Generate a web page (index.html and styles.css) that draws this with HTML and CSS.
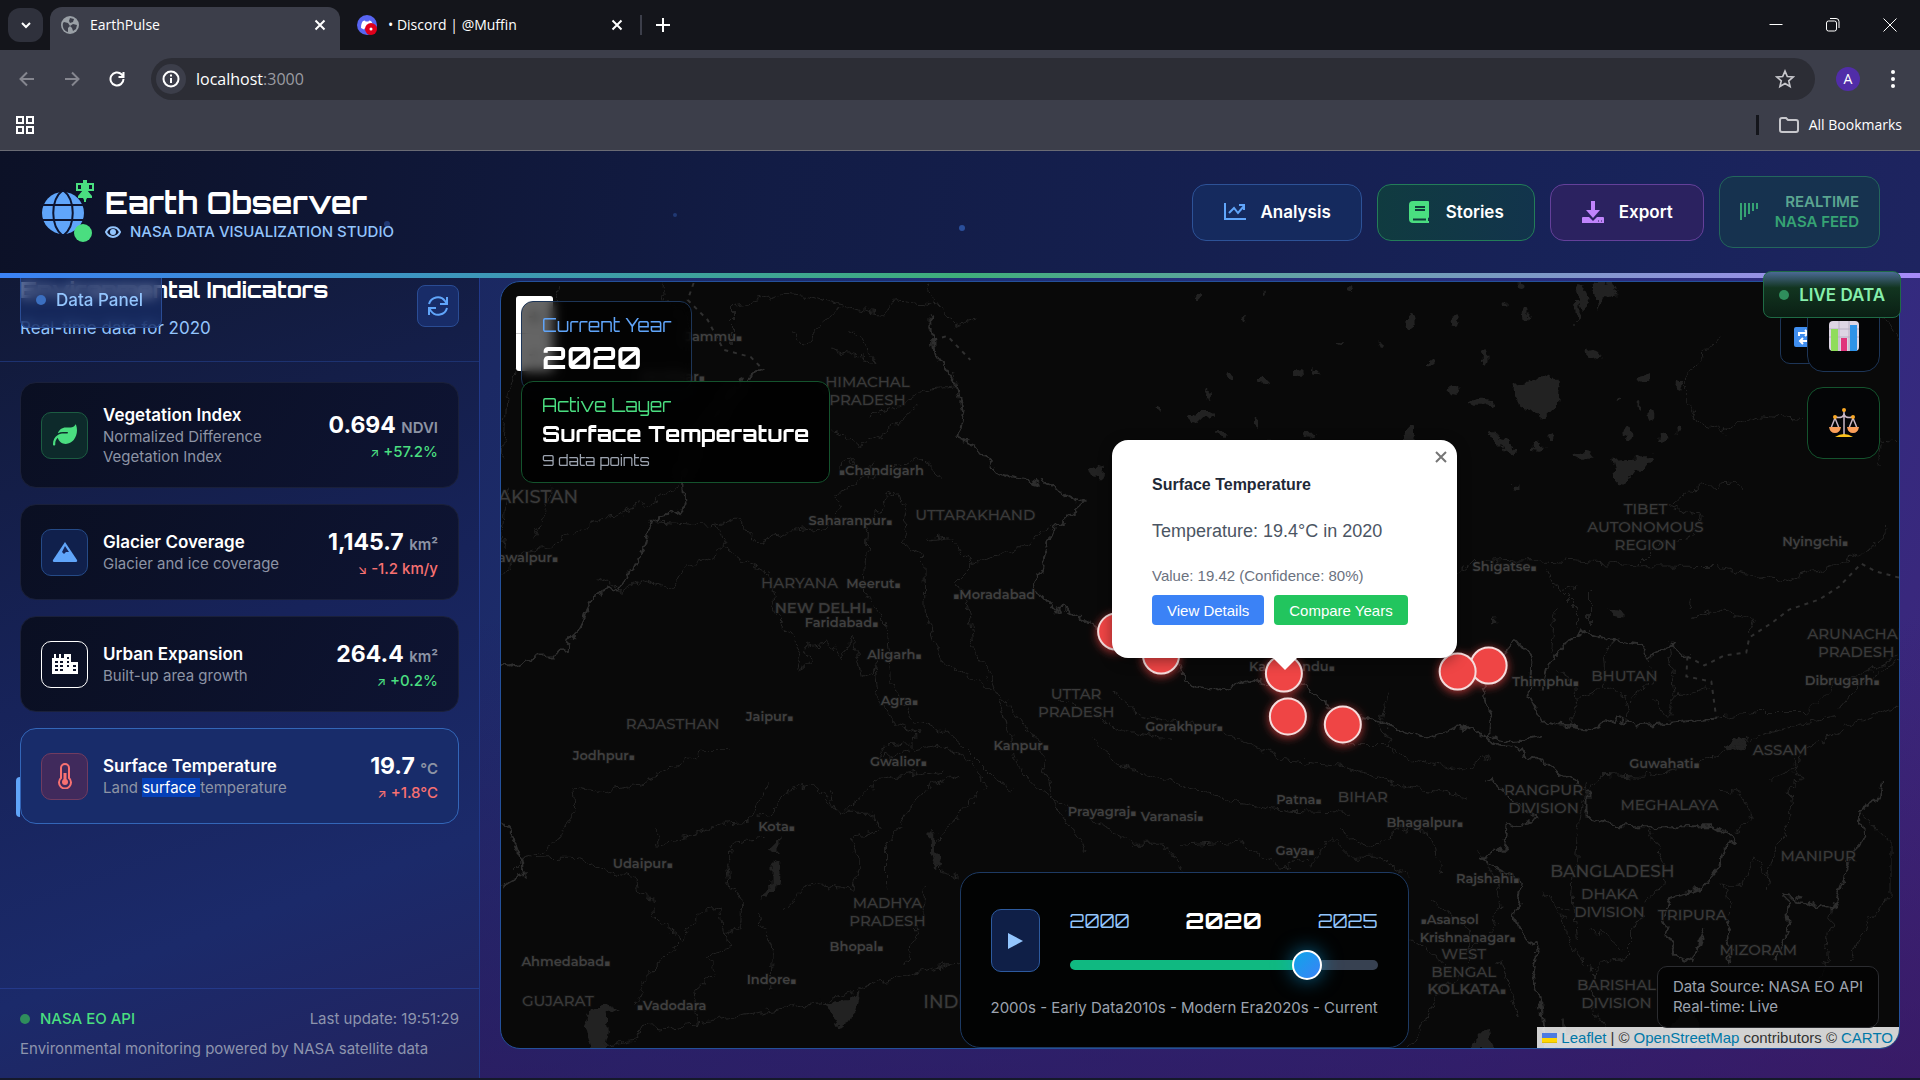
FILE: index.html
```html
<!DOCTYPE html>
<html lang="en">
<head>
<meta charset="utf-8">
<meta name="viewport" content="width=device-width, initial-scale=1">
<title>EarthPulse</title>
<link rel="stylesheet" href="styles.css">
</head>
<body>
<div class="browser">
  <div class="tabstrip">
    <button class="tab-search" aria-label="Search tabs"><svg width="12" height="12" viewBox="0 0 12 12"><path d="M2 4l4 4 4-4" class="line w2"/></svg></button>
    <div class="tab active">
      <svg width="18" height="18" viewBox="0 0 18 18"><circle cx="9" cy="9" r="9" fill="#9aa0a6"/><path d="M3 6l4 1 2 3-2 2v4C3 15 1 11 2 7zM9 2l4 1-1 3-3 1-1-2zM12 8l4 1-1 4-3 2-1-3-2-2z" fill="#3c3e4a"/></svg>
      <span class="tab-title">EarthPulse</span>
      <button class="close" aria-label="Close tab"><svg width="12" height="12" viewBox="0 0 12 12"><path d="M1.500 1.500l9 9m0-9l-9 9" class="line w2"/></svg></button>
    </div>
    <div class="tab">
      <svg width="20" height="20" viewBox="0 0 20 20"><circle cx="10" cy="10" r="10" fill="#5865f2"/><path d="M4 13c0-4 1-6 2-7l2-.5.5 1h3l.5-1 2 .5c1 1 2 3 2 7l-3 1.500-1-1.500H8l-1 1.500z" fill="#fff"/><circle cx="14" cy="14" r="6" fill="#e0001b"/><circle cx="14" cy="14" r="1.500" fill="#fff"/></svg>
      <span class="tab-title">• Discord | @Muffin</span>
      <button class="close" aria-label="Close tab"><svg width="12" height="12" viewBox="0 0 12 12"><path d="M1.500 1.500l9 9m0-9l-9 9" class="line w2"/></svg></button>
    </div>
    <span class="tab-divider"></span>
    <button class="new-tab" aria-label="New tab"><svg width="14" height="14" viewBox="0 0 14 14"><path d="M7 0v14M0 7h14" class="line w2"/></svg></button>
    <div class="window-controls">
      <button aria-label="Minimize"><svg width="14" height="14" viewBox="0 0 14 14"><path d="M.5 6.500h13" class="line"/></svg></button>
      <button aria-label="Restore"><svg width="14" height="14" viewBox="0 0 14 14"><path d="M.5 5a2 2 0 0 1 2-2h6a2 2 0 0 1 2 2v6a2 2 0 0 1-2 2h-6a2 2 0 0 1-2-2zM4 .5h6a3 3 0 0 1 3 3V10" class="line"/></svg></button>
      <button aria-label="Close"><svg width="14" height="14" viewBox="0 0 14 14"><path d="M.5.5l13 13m0-13l-13 13" class="line"/></svg></button>
    </div>
  </div>
  <div class="toolbar">
    <button class="dim" aria-label="Back"><svg width="16" height="16" viewBox="0 0 16 16"><path d="M15 8H2M8 1.500L1.500 8 8 14.500" class="line w2"/></svg></button>
    <button class="dim" aria-label="Forward"><svg width="16" height="16" viewBox="0 0 16 16"><path d="M1 8h13M8 1.500L14.500 8 8 14.500" class="line w2"/></svg></button>
    <button aria-label="Reload"><svg width="16" height="16" viewBox="0 0 16 16"><path d="M14.500 8A6.500 6.500 0 1 1 12.500 3.300L14 5M14.500 1v5h-5" class="line w2"/></svg></button>
    <div class="omnibox">
      <span class="site-info"><svg width="18" height="18" viewBox="0 0 18 18"><circle cx="9" cy="9" r="7.500" class="line w2"/><path d="M9 8v5M9 4.500v2" class="line w2"/></svg></span>
      <span class="url">localhost<i>:3000</i></span>
      <svg width="20" height="20" viewBox="0 0 24 24" class="star"><path d="M12 2.500l2.800 6.500 7 .6-5.300 4.600 1.600 6.900L12 17.500l-6.100 3.600 1.600-6.900L2.200 9.600l7-.6z" class="line w2"/></svg>
    </div>
    <span class="avatar">A</span>
    <button class="kebab" aria-label="Menu"><svg width="4" height="18" viewBox="0 0 4 18"><g fill="#fff"><circle cx="2" cy="2" r="2"/><circle cx="2" cy="9" r="2"/><circle cx="2" cy="16" r="2"/></g></svg></button>
  </div>
  <div class="bookmarks">
    <svg width="18" height="18" viewBox="0 0 18 18"><path d="M1 1h6v6H1zM11 1h6v6h-6zM1 11h6v6H1zM11 11h6v6h-6z" class="line w2"/></svg>
    <a href="#" class="all-bookmarks"><svg width="20" height="16" viewBox="0 0 20 16"><path d="M1 13V3a2 2 0 0 1 2-2h4l2 2h8a2 2 0 0 1 2 2v8a2 2 0 0 1-2 2H3a2 2 0 0 1-2-2z" fill="none" stroke="#c7c7cc" stroke-width="2"/></svg>All Bookmarks</a>
  </div>
</div>

<div class="app">
  <header class="app-header">
    <svg class="particles" viewBox="0 0 1920 122" preserveAspectRatio="xMidYMid slice"><g fill="#3b6fd0"><circle cx="675" cy="64" r="2" opacity=".35"/><circle cx="962" cy="77" r="3" opacity=".6"/><circle cx="387" cy="73" r="3" opacity=".4"/><circle cx="1250" cy="71" r="2" opacity=".6"/><circle cx="1827" cy="75" r="3" opacity=".4"/></g></svg>
    <div class="brand">
      <svg width="56" height="64" viewBox="0 0 56 64">
        <circle cx="23" cy="33" r="21" fill="#60a5fa"/>
        <path d="M0 25h46M0 40h46M23 10c-13 10-13 36 0 46M23 10c13 10 13 36 0 46" fill="none" stroke="#0d1430" stroke-width="2"/>
        <path d="M37 4h5v6h-5zM48 4h5v6h-5z" fill="none" stroke="#4ade80" stroke-width="2"/><path d="M43 0h4v10l5 6v2h-5l-1 2v2h-2v-2l-1-2h-5v-2l5-6z" fill="#4ade80"/><circle cx="43" cy="53" r="9" fill="#4ade80"/>
      </svg>
      <div class="brand-text">
        <h1>Earth Observer</h1>
        <p><svg width="16" height="12" viewBox="0 0 16 12"><path d="M1 6c3-6.500 11-6.500 14 0-3 6.500-11 6.500-14 0z" fill="none" stroke="#93c5fd" stroke-width="2"/><circle cx="8" cy="6" r="3" fill="#93c5fd"/></svg>NASA DATA VISUALIZATION STUDIO</p>
      </div>
    </div>
    <nav>
      <button class="nav-btn blue"><svg width="24" height="24" viewBox="0 0 24 24"><path d="M2 3v16h21M6 13l5-5 4 5 6-7M16 5h5v5" fill="none" stroke="#60a5fa" stroke-width="2"/></svg>Analysis</button>
      <button class="nav-btn green"><svg width="24" height="24" viewBox="0 0 24 24"><path d="M5 1h15a1 1 0 0 1 1 1v15a1 1 0 0 1-1 1v3h1v2H5a4 4 0 0 1-4-4V5a4 4 0 0 1 4-4z" fill="#4ade80"/><path d="M7 7h10M7 10h10M5 19.500h13" stroke="#103b3b" stroke-width="2"/></svg>Stories</button>
      <button class="nav-btn purple"><svg width="24" height="24" viewBox="0 0 24 24"><path d="M10 1h4v9h5l-7 8-7-8h5zM2 17h6l4 4 4-4h6a1 1 0 0 1 1 1v5H1v-5a1 1 0 0 1 1-1z" fill="#c084fc"/><path d="M17 21h1M20 21h1" stroke="#2b1d5c" stroke-width="1"/></svg>Export</button>
      <div class="feed"><svg width="20" height="18" viewBox="0 0 20 18"><path d="M1 0v17M5 0v14M9 0v11M13 0v8M17 0v6" stroke="#36a374" stroke-width="2"/></svg><span><b>REALTIME</b><br>NASA FEED</span></div>
    </nav>
  </header>

  <main>
    <aside class="sidebar">
      <span class="panel-tag"><i class="dot"></i>Data Panel</span>
      <div class="side-head">
        <div><h2>Environmental Indicators</h2><p>Real-time data for 2020</p></div>
        <button aria-label="Refresh"><svg width="20" height="20" viewBox="0 0 20 20"><path d="M1 8a9 9 0 0 1 16-3l2 3M19 1v7h-7M19 12a9 9 0 0 1-16 3l-2-3M1 19v-7h7" fill="none" stroke="#60a5fa" stroke-width="2"/></svg></button>
      </div>
      <div class="cards">
        <article class="card">
          <span class="icon green"><svg width="26" height="24" viewBox="0 0 512 512"><path fill="#4ade80" d="M272 96c-78.600 0-145.100 51.500-167.700 122.500c33.600-17 71.500-26.500 111.700-26.500h88c8.800 0 16 7.200 16 16s-7.200 16-16 16H216c-16.600 0-32.700 1.900-48.300 5.400c-25.900 5.900-49.900 16.400-71.400 30.700C38.300 298.800 0 364.900 0 440v16c0 13.300 10.700 24 24 24s24-10.700 24-24V440c0-48.700 20.700-92.500 53.800-123.200C121.600 392.300 190.300 448 272 448l1 0c132.100-.7 239-130.900 239-291.400c0-42.600-7.500-83.100-21.100-119.600c-2.600-6.900-12.700-6.600-16.200-.1C455.900 72.100 418.700 96 376 96L272 96z"/></svg></span>
          <div class="name"><h3>Vegetation Index</h3><p>Normalized Difference Vegetation Index</p></div>
          <div class="value"><strong>0.694 <small>NDVI</small></strong><span class="up"><em>↗</em> +57.2%</span></div>
        </article>
        <article class="card">
          <span class="icon blue"><svg width="26" height="22" viewBox="0 0 26 22"><path d="M13 1l12 18c.5 1 0 2-1 2H2c-1 0-1.500-1-1-2z" fill="#60a5fa"/><path d="M13 5l4 6h-3l-2 2-2-2z" fill="#15265c"/></svg></span>
          <div class="name"><h3>Glacier Coverage</h3><p>Glacier and ice coverage</p></div>
          <div class="value"><strong>1,145.7 <small>km²</small></strong><span class="down"><em>↘</em> -1.2 km/y</span></div>
        </article>
        <article class="card">
          <span class="icon plain"><svg width="26" height="22" viewBox="0 0 26 22"><path d="M0 5h2V1h2v4h3V1h2v4h3V1h7v8h7v12H0z" fill="#fff"/><path d="M3 9h3M8 9h3M15 5h2M15 9h2M3 13h3M8 13h3M15 13h2M21 13h3M3 17h3M8 17h3M21 17h3" stroke="#0c1229" stroke-width="2"/></svg></span>
          <div class="name"><h3>Urban Expansion</h3><p>Built-up area growth</p></div>
          <div class="value"><strong>264.4 <small>km²</small></strong><span class="up"><em>↗</em> +0.2%</span></div>
        </article>
        <article class="card selected">
          <span class="icon red"><svg width="14" height="26" viewBox="0 0 14 26"><path d="M3 15V5a4 4 0 0 1 8 0v10a6 6 0 1 1-8 0z" fill="none" stroke="#f87171" stroke-width="2"/><circle cx="7" cy="19" r="3" fill="#f87171"/><path d="M7 10v9" stroke="#f87171" stroke-width="3"/></svg></span>
          <div class="name"><h3>Surface Temperature</h3><p>Land <mark>surface </mark>temperature</p></div>
          <div class="value"><strong>19.7 <small>°C</small></strong><span class="down"><em>↗</em> +1.8°C</span></div>
        </article>
      </div>
      <footer>
        <div><span class="api"><i class="dot"></i>NASA EO API</span><span>Last update: 19:51:29</span></div>
        <p>Environmental monitoring powered by NASA satellite data</p>
      </footer>
    </aside>

    <section class="map" aria-label="Map">
      <svg class="tiles" viewBox="500 282 1400 767" preserveAspectRatio="xMidYMid slice">
        <defs><filter id="rough" x="-5%" y="-5%" width="110%" height="110%"><feTurbulence type="fractalNoise" baseFrequency=".09" numOctaves="3" seed="4"/><feDisplacementMap in="SourceGraphic" scale="13" xChannelSelector="R" yChannelSelector="G"/></filter>
        <filter id="glow" x="-50%" y="-50%" width="200%" height="200%"><feDropShadow dx="0" dy="2" stdDeviation="5" flood-color="#ef4444" flood-opacity=".75"/></filter></defs>
        <g class="water" filter="url(#rough)">
          <path d="M590 1010l13-7 15 10-11 1 1 20-4 16h-14l-6-22zM1514 385l22-4 12-8 12 14-3 18-14 14-12-9-16-5zM1612 459l43-2-9 11-14 9-15 7zM1488 431l16 7 13 12-5 4-12-8zM1575 285l10 3 5 15-6 6zM1595 285l18-3 4 12-12 3-6 12zM1575 300l6 1v18l-4 4zM1750 745l-22 8-2-7 14-7zM1608 609l18 3v7l-12-2zM820 1005l28-3 10-9-4 24-16 12-4-12zM772 860l8 4-2 22-16 15 2-8 8-8zM766 850l12-12v16zM930 833h5v20l8 12-8 6-4-16zM1675 1025l12-24 12 22v26h-30zM1470 1049l20-23 4 23zM1545 1049l18-28 6 20 10-12 8 20z"/>
          <g><ellipse cx="1196" cy="297" rx="3" ry="2"/><ellipse cx="1265" cy="293" rx="2" ry="3"/><ellipse cx="1243" cy="320" rx="3" ry="2"/><ellipse cx="1410" cy="323" rx="5" ry="7"/><ellipse cx="1455" cy="320" rx="3" ry="3"/><ellipse cx="1505" cy="305" rx="2" ry="4"/><ellipse cx="1526" cy="312" rx="3" ry="8"/><ellipse cx="1522" cy="286" rx="4" ry="3"/><ellipse cx="1382" cy="345" rx="3" ry="3"/><ellipse cx="1340" cy="341" rx="3" ry="2"/><ellipse cx="1485" cy="358" rx="3" ry="7"/><ellipse cx="1430" cy="362" rx="4" ry="2"/><ellipse cx="1593" cy="354" rx="7" ry="4"/><ellipse cx="1297" cy="372" rx="4" ry="5"/><ellipse cx="1316" cy="371" rx="4" ry="3"/><ellipse cx="1229" cy="377" rx="4" ry="5"/><ellipse cx="1261" cy="383" rx="5" ry="3"/><ellipse cx="1454" cy="391" rx="8" ry="6"/><ellipse cx="1482" cy="403" rx="12" ry="4"/><ellipse cx="1644" cy="380" rx="6" ry="5"/><ellipse cx="1680" cy="385" rx="3" ry="7"/><ellipse cx="1619" cy="400" rx="2" ry="3"/><ellipse cx="1651" cy="415" rx="3" ry="8"/><ellipse cx="1639" cy="404" rx="2" ry="6"/><ellipse cx="1208" cy="395" rx="3" ry="4"/><ellipse cx="1159" cy="409" rx="2" ry="3"/><ellipse cx="1202" cy="417" rx="13" ry="4"/><ellipse cx="1257" cy="424" rx="3" ry="7"/><ellipse cx="1223" cy="434" rx="5" ry="4"/><ellipse cx="1310" cy="436" rx="5" ry="3"/><ellipse cx="1262" cy="443" rx="9" ry="4"/><ellipse cx="1409" cy="436" rx="5" ry="8"/><ellipse cx="1552" cy="437" rx="2" ry="5"/><ellipse cx="1629" cy="434" rx="4" ry="8"/><ellipse cx="1663" cy="437" rx="6" ry="4"/><ellipse cx="1538" cy="446" rx="5" ry="3"/><ellipse cx="1582" cy="456" rx="9" ry="3"/><ellipse cx="1680" cy="431" rx="3" ry="3"/><ellipse cx="1516" cy="487" rx="3" ry="2"/><ellipse cx="1097" cy="472" rx="6" ry="7"/><ellipse cx="1350" cy="290" rx="3" ry="2"/><ellipse cx="1692" cy="604" rx="1" ry="4"/><ellipse cx="1495" cy="621" rx="3" ry="1"/><ellipse cx="930" cy="323" rx="2" ry="7"/></g>
        </g>
        <g class="thin" filter="url(#rough)">
          <path d="M506 490l-5 60M530 540l15-28 6-25M501 575l20-22 24-4 30-18 28-12 45-16 32-18"/>
          <path d="M651 522l65 4 20-8 22 26 30-12 35-4 20-22-8-12 22-8 16-26M716 526l10 22-22 14-18 4-16 24-28-10-20 12-25-14M724 548l44 26 8 40 24 36-4 20 14-6-6-18 26-4 10 18 12-22 10 40 14-10"/>
          <path d="M889 492l-22 40-4 60 22 30 6 60 10 20 12 20 30 10 20 14 30 30 20 16M889 492l20 12-8 40 22 10 2 60 18 50 38 20 28 20 30 40 14 60 34 50M925 540l25-4 22 30-16 16 10 20 8 50 14 20 18 50 8 40 28 30 36 26M972 566l50-20 30-20"/>
          <path d="M874 660l4 40 16 26 26 8-10 12-22-2-8 14 30-8 30-4 30 16 16 24-24 26-30 36M940 770l-60 10-40 34-30-30-22 6-18 26-14 2M732 750l-30 0-24 16-36 18-44 10-26-6 2 20-10 20-14 20-30 14-8 8M520 860l40-2 16 0 24 12 34 8 4 18 14 2 2 18 28 24 20-30 18-2 3 28 8 14-22 6 6 18-22 18 4 34"/>
          <path d="M603 1048l30-6 8-14 20 2 14-3 34-5 114-20 60-20 78-20M633 1008l12-28 35-38M657 828v18l34-10 30-12 28-2 20-40M730 887l-3-20 6-24 34-6M730 887l12 20-1 20-20 10M758 915l14 34-2 42M780 913l30-30 42 7 8-27-10-23 30-10-7-17-36 0-10-23M885 887v-40l25-37 20-24 32-10M932 862l10 10 20 8M905 965l20-60 0-20"/>
          <path d="M662 283l2 16 28 28-2 14M560 285l-6 24-30 30-18 60-4 60M732 347v-40l50-14 25 3 38 10 38 8 12-14 38 4M790 330l14 16 20-26 24-14M850 330l28 32-20-6-30-6M870 415l30-10 30-16 26-2M830 430l30 14 34-16 24-24M836 470l14-12 20 20 30-14 20-6 22 20M924 285l30 40 22-6"/>
          <path d="M1457 575l16-13 60-2 40 2 60 4 84 1 70 15 53-19 33-16 17-20M1670 508l24-20 40-4 10 6M1672 507l30 10-14 22-30 6-20 20M1685 380l0 20 15 23 23 9 37-17 47 4M1683 380l20-22 20-22M1880 440l20 2M1882 445l-2 20M1885 315l15 25M1548 570l10 20 20 20 0 20M1556 610l-4 40M1590 592v40M1560 590l20-4M1695 618l24-8 36 10-6 14M1717 719l43-6 47 0 30-30 30-10 33-16M1840 710l20-24 40-24M1590 790l14-14 40 2 60-16 50-24 60-16 24-6M1770 780l28-14 4-14 38-20 60-26"/>
          <path d="M1556 670l20 12 2 24-10 18M1578 700l28-14-2-30 12-18M1606 686l20 14 4 24M1630 700l24-20-6-22M1654 700l14 20 8-24 36-8M1676 696l-6-46"/>
          <path d="M1558 907l15 40 20 26 0 30 16 40M1540 893l18 14 12 4M1593 973l10-10 27-6 0-24 14-20M1588 930l20 6 16 14M1588 780l-10 50-4 70 4 40M1650 828l8 20 8 16-4 24-16 14M1720 790l18 2 16 26-20 16M1790 790l12-10-10-20M1790 790l2 30-20 40-4 30M1770 880l-16-20-10 26-24 0M1726 886l4 30M1863 814l30 30 0 50-24 30-20 40M1833 910l-6 50-6 20M1480 850l20 40-4 40-30 22M1500 960l20 60"/>
          <path d="M1090 740l30 26 40 14 80 24 50 8 60 2M1060 700l60 30 50 10M1110 690l30 26 80 14 60 30 60 6 60 20 70 14M1344 745l40 0 30 16 50 10 26-16M1390 690l-10 36 16 30M1092 820l40 24 30 0 20 26M1180 846l60-4 40 26 30-8M1310 868l20-30 20 20 30 0 30 20M1340 830l30 20 30-22 30 6 14 40M1430 900l40 30 0 40-30 20-30 60M1410 940l50 34"/>
        </g>
        <g class="thick" filter="url(#rough)">
          <path d="M683 483l2 20-8 10-26 8-6 24-12 23-7 14-32 15-6 10-4 16-16 17-2 11-13 5h-15l-30 11-8-2M501 822l9 11 10 27 3 15-21 13M1041 480l42 23-32 29-8 35-10 21 23 24 8-4 26 16 50 30 42 12 2 16 34 10 32-12 26 6 20-4 40 30 36 8 54 20 34-12 54 14 30-6M763 370l-24 12-16 22-30 40-10 40M930 317l4 36 22 30 6 30-4 26 16 6 24 28 42 12"/>
          <path d="M1507 647l11-5 14 15-2 40 13 25 30 5 20 3 24-11 20 7 36-3 44-4M1543 690l7-27 17-21 18-9 23 7 32 5 7 12 26-12 15 12M1507 647l-24 43 9 27-2 26 33 10 44 24 20 14 0 28 33 8 93 0 24 14-12 5-5 23-17 20-30 7-10 26 14 37 16 5 14-38M1725 917l7 46M1490 780l20 20 30 20-32 7-3 20-22 13 40 23-8 37 22 30-4 23 10 40 4 35M1883 780l-3 20-22 13 7 20-18 40-14 37-26-8-20-5 3 33-15 33"/>
        </g>
        <g class="dotted"><path d="M693 283l-6 17 20 20 16 30 27 7 13 13M933 340l14-4 23 24M1688 657l17 9 20-10 22-3 3-15 23-15 17-13 30-10 20-13 22-23 15 8 23 6M1688 657l-1 20 25 5 5 37"/></g>
        <g class="region">
          <text x="497" y="503" class="big" text-anchor="start">AKISTAN</text><text x="867" y="387">HIMACHAL</text><text x="867" y="405">PRADESH</text><text x="975" y="520">UTTARAKHAND</text><text x="799" y="588">HARYANA</text><text x="823" y="613" class="bold">NEW DELHI<tspan class="sq">▪</tspan></text><text x="672" y="730">RAJASTHAN</text><text x="1076" y="700">UTTAR</text><text x="1076" y="718">PRADESH</text><text x="887" y="909">MADHYA</text><text x="887" y="927">PRADESH</text><text x="557" y="1007">GUJARAT</text><text x="923" y="1009" class="big" text-anchor="start">INDIA</text><text x="1646" y="514">TIBET</text><text x="1646" y="532">AUTONOMOUS</text><text x="1646" y="550">REGION</text><text x="1625" y="682">BHUTAN</text><text x="1808" y="639" text-anchor="start">ARUNACHAL</text><text x="1857" y="657">PRADESH</text><text x="1781" y="756">ASSAM</text><text x="1544" y="796">RANGPUR</text><text x="1544" y="814">DIVISION</text><text x="1670" y="811">MEGHALAYA</text><text x="1819" y="862">MANIPUR</text><text x="1613" y="878" class="wide">BANGLADESH</text><text x="1610" y="900">DHAKA</text><text x="1610" y="918">DIVISION</text><text x="1693" y="921">TRIPURA</text><text x="1759" y="956">MIZORAM</text><text x="1464" y="960">WEST</text><text x="1464" y="978">BENGAL</text><text x="1467" y="995" class="bold">KOLKATA<tspan class="sq">▪</tspan></text><text x="1617" y="991">BARISHAL</text><text x="1617" y="1009">DIVISION</text><text x="1363" y="803">BIHAR</text>
        </g>
        <g class="city">
          <text x="713" y="341">Jammu<tspan class="sq">▪</tspan></text><text x="672" y="381">Amritsar<tspan class="sq">▪</tspan></text><text x="881" y="475"><tspan class="sq">▪</tspan>Chandigarh</text><text x="850" y="525">Saharanpur<tspan class="sq">▪</tspan></text><text x="527" y="562">awalpur<tspan class="sq">▪</tspan></text><text x="873" y="588">Meerut<tspan class="sq">▪</tspan></text><text x="994" y="599"><tspan class="sq">▪</tspan>Moradabad</text><text x="841" y="627">Faridabad<tspan class="sq">▪</tspan></text><text x="894" y="660">Aligarh<tspan class="sq">▪</tspan></text><text x="899" y="706">Agra<tspan class="sq">▪</tspan></text><text x="769" y="722">Jaipur<tspan class="sq">▪</tspan></text><text x="603" y="761">Jodhpur<tspan class="sq">▪</tspan></text><text x="1021" y="751">Kanpur<tspan class="sq">▪</tspan></text><text x="898" y="767">Gwalior<tspan class="sq">▪</tspan></text><text x="776" y="832">Kota<tspan class="sq">▪</tspan></text><text x="642" y="869">Udaipur<tspan class="sq">▪</tspan></text><text x="856" y="952">Bhopal<tspan class="sq">▪</tspan></text><text x="565" y="967">Ahmedabad<tspan class="sq">▪</tspan></text><text x="771" y="985">Indore<tspan class="sq">▪</tspan></text><text x="671" y="1011"><tspan class="sq">▪</tspan>Vadodara</text><text x="1184" y="732">Gorakhpur<tspan class="sq">▪</tspan></text><text x="1292" y="672">Kathmandu<tspan class="sq">▪</tspan></text><text x="1505" y="571">Shigatse<tspan class="sq">▪</tspan></text><text x="1816" y="546">Nyingchi<tspan class="sq">▪</tspan></text><text x="1546" y="687">Thimphu<tspan class="sq">▪</tspan></text><text x="1843" y="686">Dibrugarh<tspan class="sq">▪</tspan></text><text x="1665" y="769">Guwahati<tspan class="sq">▪</tspan></text><text x="1102" y="817">Prayagraj<tspan class="sq">▪</tspan></text><text x="1172" y="822">Varanasi<tspan class="sq">▪</tspan></text><text x="1299" y="805">Patna<tspan class="sq">▪</tspan></text><text x="1425" y="828">Bhagalpur<tspan class="sq">▪</tspan></text><text x="1295" y="856">Gaya<tspan class="sq">▪</tspan></text><text x="1488" y="884">Rajshahi<tspan class="sq">▪</tspan></text><text x="1450" y="925"><tspan class="sq">▪</tspan>Asansol</text><text x="1468" y="943">Krishnanagar<tspan class="sq">▪</tspan></text>
        </g>
        <g class="markers" filter="url(#glow)"><circle cx="1116" cy="632" r="18"/><circle cx="1161" cy="656" r="18"/><circle cx="1284" cy="674" r="18"/><circle cx="1288" cy="717" r="18"/><circle cx="1343" cy="725" r="18"/><circle cx="1489" cy="666" r="18"/><circle cx="1458" cy="672" r="18"/></g>
      </svg>

      <div class="zoom-control"><button aria-label="Zoom in">+</button><button aria-label="Zoom out">−</button></div>
      <div class="overlay year"><span>Current Year</span><strong>2020</strong></div>
      <div class="overlay layer"><span>Active Layer</span><strong>Surface Temperature</strong><small>9 data points</small></div>

      <div class="popup">
        <button class="popup-close" aria-label="Close"><svg width="12" height="12" viewBox="0 0 12 12"><path d="M1 1l10 10M11 1L1 11" stroke="#757575" stroke-width="2"/></svg></button>
        <h3>Surface Temperature</h3>
        <p>Temperature: 19.4°C in 2020</p>
        <p class="conf">Value: 19.42 (Confidence: 80%)</p>
        <div class="popup-actions"><button>View Details</button><button class="compare">Compare Years</button></div>
      </div>

      <button class="tool small" aria-label="Reload map"><svg width="20" height="20" viewBox="0 0 20 20"><rect width="20" height="20" rx="2" fill="#3f8ef0"/><path d="M5 9V6h8M11 3l3 3-3 3M15 11v3H7M9 11l-3 3 3 3" fill="none" stroke="#fff" stroke-width="2"/></svg></button>
      <button class="tool chart" aria-label="Charts"><svg width="30" height="30" viewBox="0 0 30 30"><rect width="30" height="30" rx="4" fill="#ddd5e4"/><path d="M0 8h30M0 16h30M10 0v30M20 0v30" stroke="#b9b0c4"/><path d="M2 8h7v22H2z" fill="#8fdc5b"/><path d="M12 17h6v13h-6z" fill="#e0347b"/><path d="M21 4h7v26h-7z" fill="#2f93e8"/></svg></button>
      <button class="tool scale" aria-label="Compare"><svg width="30" height="30" viewBox="0 0 30 30"><path d="M15 2v25M6 9q9 2 9-4 0 6 9 4M6 10L2 20M6 10l4 10M24 10l-4 10M24 10l4 10" fill="none" stroke="#c9b7c4" stroke-width="1.500"/><path d="M0 19h12q-1 6-6 6t-6-6M18 19h12q-1 6-6 6t-6-6" fill="#fb9f5a"/><path d="M6 29q9-6 18 0z" fill="#fcc21b"/><g fill="#f9a825"><circle cx="15" cy="2" r="2"/><circle cx="6" cy="9" r="2"/><circle cx="24" cy="9" r="2"/></g></svg></button>

      <div class="timeline">
        <div class="time-row">
          <button aria-label="Play"><svg width="15" height="16" viewBox="0 0 15 16"><path d="M0 0l15 8-15 8z" fill="#93c5fd"/></svg></button>
          <div class="time-main">
            <div class="years"><span>2000</span><strong>2020</strong><span>2025</span></div>
            <input type="range" min="2000" max="2025" value="2020" aria-label="Year">
          </div>
        </div>
        <div class="eras"><span>2000s - Early Data</span><span>2010s - Modern Era</span><span>2020s - Current</span></div>
      </div>

      <div class="attribution"><svg width="15" height="10" viewBox="0 0 15 10"><path fill="#4c7be1" d="M0 0h15v5H0z"/><path fill="#ffd500" d="M0 5h15v4H0z"/><path fill="#e0bc00" d="M0 9h15v1H0z"/></svg> <a href="#">Leaflet</a> | © <a href="#">OpenStreetMap</a> contributors © <a href="#">CARTO</a></div>
      <div class="source">Data Source: NASA EO API<br>Real-time: Live</div>
    </section>
  </main>
  <span class="live"><i class="dot"></i>LIVE DATA</span>
</div>
</body>
</html>
```
FILE: styles.css
```css
* { box-sizing: border-box; }
body { margin: 0; min-height: 100vh; display: flex; flex-direction: column; font-family: Inter, "Liberation Sans", sans-serif; color: #fff; background: #15192b; padding-bottom: 2px; }
h1, h2, h3, p { margin: 0; }
button { font: inherit; color: inherit; border: 0; padding: 0; background: none; display: flex; align-items: center; justify-content: center; }
svg { display: block; flex: none; }
i, em { font-style: normal; }
.line { fill: none; stroke: currentColor; stroke-width: 1; }
.w2 { stroke-width: 2; }

/* browser frame */
.browser { background: #3c3e4a; font: 14px/20px "Open Sans", "Noto Sans", sans-serif; border-bottom: 1px solid #6a6b74; }
.tabstrip { height: 50px; padding: 0 2px 0 8px; background: #14151b; display: flex; align-items: center; }
.tab-search { width: 35px; height: 34px; border-radius: 12px; background: #2f313c; }
.tab { width: 290px; height: 43px; margin-top: 7px; padding: 0 14px 8px 11px; display: flex; align-items: center; gap: 11px; }
.tab.active { margin-left: 7px; background: #3c3e4a; border-radius: 12px 12px 0 0; }
.tab:not(.active) { padding-left: 17px; padding-right: 7px; }
.tab-title { flex: 1; }
.tab-divider { width: 2px; height: 20px; margin-left: 10px; background: #3c3e4a; }
.new-tab { width: 42px; height: 34px; }
.window-controls { margin-left: auto; display: flex; }
.window-controls button { width: 57px; height: 48px; }
.toolbar { height: 58px; padding: 0 17px 0 4px; display: flex; align-items: center; }
.toolbar > button { width: 45px; height: 34px; }
.toolbar > button.kebab { width: 20px; margin-left: 23px; }
.dim { color: #85868f; }
.omnibox { flex: 1; height: 42px; margin-left: 12px; padding: 0 20px 0 5px; border-radius: 21px; background: #2c2d35; display: flex; align-items: center; }
.site-info { width: 30px; height: 30px; border-radius: 15px; background: #3c3e4a; display: flex; align-items: center; justify-content: center; }
.url { flex: 1; margin-left: 10px; font-size: 16px; }
.url i { color: #9b9ca2; }
.star { color: #c7c7cc; }
.avatar { width: 24px; height: 24px; margin-left: 21px; border-radius: 12px; background: #512da8; text-align: center; line-height: 24px; font-size: 14px; }
.bookmarks { height: 42px; padding: 0 18px 8px 16px; display: flex; align-items: center; justify-content: space-between; }
.all-bookmarks { color: #fff; text-decoration: none; display: flex; align-items: center; gap: 10px; padding-left: 20px; border-left: 3px solid #14151b; }

/* app shell */
.app { flex: 1; display: flex; flex-direction: column; position: relative; background: linear-gradient(180deg, transparent 50%, rgba(50, 20, 90, .6)), linear-gradient(115deg, #16204a, #1f3078 45%, #302c80 80%, #42247a); }
.app-header { position: relative; z-index: 2; min-height: 127px; padding: 0 40px; display: flex; align-items: center; justify-content: space-between; background: linear-gradient(100deg, #0c1127, #121c45 40%, #18235a 85%, #1e2460); border-bottom: 5px solid; border-image: linear-gradient(90deg, #3b82f6, #3fae7a 50%, #a78bfa) 1; }
.particles { position: absolute; left: 0; top: 0; width: 100%; height: 100%; }
.brand { display: flex; align-items: center; gap: 9px; }
.brand-text { padding-top: 5px; }
.brand h1 { font: bold 30px/34px Orbitron, "DejaVu Sans", sans-serif; }
.brand p { display: flex; align-items: center; gap: 9px; font-size: 15px; line-height: 24px; font-weight: 500; color: #93c5fd; }
nav { display: flex; align-items: center; gap: 15px; position: relative; }
.nav-btn { height: 57px; padding: 0 30px; gap: 14px; border: 1px solid; border-radius: 14px; font-size: 17px; font-weight: 600; }
.nav-btn.blue { background: #152a5e; border-color: #2d5297; }
.nav-btn.green { background: linear-gradient(90deg, #103b40, #12344c); border-color: #237d58; }
.nav-btn.purple { background: #2b2260; border-color: #64409a; }
.feed { height: 72px; padding: 0 20px; border: 1px solid #23665c; border-radius: 14px; background: #16324f; display: flex; align-items: center; gap: 15px; font-size: 15px; line-height: 20px; font-weight: 600; color: #36a374; text-align: right; }
.feed b { color: #5ba591; font-weight: 600; }
.dot { display: inline-block; width: 10px; height: 10px; border-radius: 5px; background: #3b6fc0; }
.live { position: absolute; z-index: 3; right: 19px; top: 120px; height: 47px; padding: 0 15px; display: flex; align-items: center; gap: 10px; border: 1px solid #1f6b45; border-radius: 8px; background: linear-gradient(#4b6a94, #123520 35%, #0a1f14); color: #86efac; font-size: 17px; font-weight: 600; }
.live .dot, .api .dot { background: #2f8e5c; }
main { flex: 1; display: flex; align-items: stretch; }

/* sidebar */
.sidebar { width: 480px; flex: none; position: relative; display: flex; flex-direction: column; border-right: 1px solid #21398a; background: linear-gradient(160deg, #111936, #17235a 45%, #1b2a6a 75%, #23235f); }
.panel-tag { position: absolute; z-index: 1; left: 20px; top: 0; width: 142px; height: 50px; padding: 0 15px 6px; display: flex; align-items: center; gap: 10px; border: 1px solid #2a4c94; border-top: 0; border-radius: 0 0 8px 8px; background: rgba(24, 48, 112, .6); backdrop-filter: blur(6px); color: #93c5fd; font-size: 17px; font-weight: 500; white-space: nowrap; }
.side-head { padding: 0 20px 21px; display: flex; justify-content: space-between; border-bottom: 1px solid #1d3270; }
.side-head h2 { margin-bottom: 15px; font: bold 22px/23px Orbitron, "DejaVu Sans", sans-serif; white-space: nowrap; }
.side-head p { font-size: 17px; line-height: 24px; color: #93c5fd; }
.side-head button { width: 42px; height: 42px; margin-top: 7px; border: 1px solid #2a4c94; border-radius: 8px; background: #182c68; }
.cards { flex: 1; padding: 20px; display: flex; flex-direction: column; gap: 16px; }
.card { position: relative; padding: 20px; display: flex; align-items: center; gap: 15px; border: 1px solid #1a203a; border-radius: 16px; background: linear-gradient(120deg, #0a0f22, #0e1433); }
.card.selected { border-color: #3366b8; background: #182c6a; }
.card.selected::before { content: ""; position: absolute; left: -5px; top: 48px; width: 4px; height: 40px; border-radius: 4px 0 0 4px; background: #60a5fa; }
.icon { width: 47px; height: 47px; border: 1px solid #fff; border-radius: 10px; display: flex; align-items: center; justify-content: center; }
.icon.green { background: #0d2a2b; border-color: #1c5c42; }
.icon.blue { background: #10204c; border-color: #254a86; }
.icon.red { background: #402a5c; border-color: #713c60; }
.name { flex: 1; }
.name h3 { font-size: 17px; line-height: 24px; font-weight: 600; }
.name p { max-width: 190px; font-size: 15px; line-height: 20px; color: #8d94a5; }
mark { background: #0540b8; color: #fff; }
.value { text-align: right; white-space: nowrap; }
.value strong { display: block; font-size: 23px; line-height: 34px; font-weight: 700; }
.value small { font-size: 15px; line-height: 1; font-weight: 600; color: #8d94a5; }
.value span { display: block; font-size: 15px; line-height: 20px; font-weight: 500; }
.value em { font-size: 12px; line-height: 1; }
.up { color: #4ade80; }
.down { color: #f87171; }
.sidebar footer { padding: 18px 20px 17px; border-top: 1px solid #24398a; font-size: 15px; line-height: 24px; color: #8d94ad; }
.sidebar footer div { display: flex; justify-content: space-between; margin-bottom: 6px; }
.api { color: #4ade80; font-weight: 500; display: flex; align-items: center; gap: 10px; }

/* map */
.map { flex: 1; min-height: 766px; margin: 3px 20px 29px; position: relative; overflow: hidden; border: 1px solid #24509a; border-radius: 20px; background: #090909; }
.tiles { position: absolute; inset: 0; width: 100%; height: 100%; }
.water { fill: #222; }
.thin, .thick, .dotted { fill: none; stroke: #222; }
.thick { stroke: #2e2e2e; stroke-width: 2; }
.dotted { stroke: #303030; stroke-width: 2; stroke-dasharray: 4 5; }
.region, .city { font-family: Montserrat, Inter, sans-serif; fill: #3a3a3a; text-anchor: middle; paint-order: stroke; stroke: #101010; stroke-width: 2px; }
.region { font-size: 15px; font-weight: 500; }
.region .big { font-size: 18px; }
.region .wide { font-size: 17px; }
.region .bold { font-weight: 600; }
.city { font-size: 13px; font-weight: 600; fill: #404040; }
.sq { font-family: "DejaVu Sans", sans-serif; font-size: 9px; }
.markers { fill: #ef4444; stroke: #f5dcdc; stroke-width: 2; }
.zoom-control { position: absolute; left: 15px; top: 14px; width: 37px; border-radius: 3px; background: #fff; color: #333; overflow: hidden; }
.zoom-control button { width: 37px; height: 37px; font-size: 22px; }
.zoom-control button + button { border-top: 1px solid #ccc; height: 38px; }
.overlay { position: absolute; left: 20px; display: flex; flex-direction: column; padding: 11px 20px; border: 1px solid #1d3557; border-radius: 12px; background: rgba(0, 0, 0, .6); backdrop-filter: blur(6px); font-family: Orbitron, "DejaVu Sans", sans-serif; }
.overlay span { font-size: 18px; line-height: 24px; }
.year { top: 19px; height: 90px; }
.year span { color: #60a5fa; }
.year strong { font-size: 30px; line-height: 42px; }
.layer { top: 99px; height: 102px; border-color: #14532d; background: rgba(0, 0, 0, .8); }
.layer span { color: #4ade80; }
.layer strong { font-size: 22px; line-height: 34px; }
.layer small { font-size: 15px; line-height: 20px; color: #9ca3af; }
.popup { position: absolute; left: 611px; top: 158px; width: 345px; padding: 34px 40px 33px; border-radius: 16px; background: #fff; color: #4b5563; font-family: "Liberation Sans", Arial, sans-serif; box-shadow: 0 3px 14px rgba(0, 0, 0, .4); }
.popup::after { content: ""; position: absolute; left: 50%; top: 100%; margin-left: -12px; border: 12px solid transparent; border-top-color: #fff; border-bottom: 0; }
.popup-close { position: absolute; right: 10px; top: 11px; }
.popup h3 { font-size: 16px; line-height: 22px; color: #1f2937; }
.popup p { margin-top: 22px; font-size: 18px; line-height: 26px; white-space: nowrap; }
.popup .conf { font-size: 15px; line-height: 20px; color: #6b7280; }
.popup-actions { display: flex; gap: 10px; margin-top: 9px; color: #fff; font-size: 15px; }
.popup-actions button { height: 30px; padding: 0 15px; border-radius: 4px; background: #3b82f6; white-space: nowrap; }
.popup-actions .compare { background: #22c55e; }
.tool { position: absolute; right: 19px; width: 73px; height: 72px; border: 1px solid #1d3557; border-radius: 16px; background: #040506; }
.tool.small { right: 46px; top: 28px; height: 54px; border-radius: 10px; justify-content: flex-start; padding-left: 13px; }
.tool.chart { top: 18px; }
.tool.scale { top: 105px; border-color: #14532d; }
.timeline { position: absolute; left: 0; right: 32px; bottom: 0; margin: 0 auto; width: 449px; height: 176px; padding: 36px 30px 0; border: 1px solid #1d3a63; border-radius: 20px; background: #020303; }
.time-row { display: flex; gap: 30px; }
.time-row > button { width: 49px; height: 63px; border: 1px solid #2d5a9e; border-radius: 10px; background: #0f1f47; }
.time-main { flex: 1; min-width: 0; }
.years { display: flex; justify-content: space-between; align-items: center; font: 18px/24px Orbitron, "DejaVu Sans", sans-serif; color: #93c5fd; }
.years strong { font-size: 23px; color: #fff; }
input[type=range] { appearance: none; display: block; width: 100%; height: 30px; margin: 17px 0 0; background: none; }
input[type=range]::-webkit-slider-runnable-track { height: 10px; border-radius: 5px; background: linear-gradient(90deg, #10b981 77%, #374151 77%); }
input[type=range]::-webkit-slider-thumb { appearance: none; width: 30px; height: 30px; margin-top: -10px; border: 2px solid #fff; border-radius: 15px; background: linear-gradient(135deg, #0ea5e9, #3b82f6); box-shadow: 0 0 20px rgba(14, 165, 233, .6); }
.eras { display: flex; justify-content: space-between; margin-top: 16px; font-size: 15px; line-height: 24px; color: #9ca3af; white-space: nowrap; }
.attribution { position: absolute; right: 0; bottom: 0; height: 21px; padding: 0 6px 0 5px; display: flex; align-items: center; gap: 4px; background: rgba(255, 255, 255, .82); color: #333; font: 15px/21px "Liberation Sans", Arial, sans-serif; white-space: nowrap; }
.attribution a { color: #0078a8; text-decoration: none; }
.source { position: absolute; right: 20px; bottom: 20px; padding: 10px 15px; border: 1px solid #2b2c30; border-radius: 10px; background: rgba(4, 4, 4, .85); color: #9ca3af; font-size: 15px; line-height: 20px; }
```
